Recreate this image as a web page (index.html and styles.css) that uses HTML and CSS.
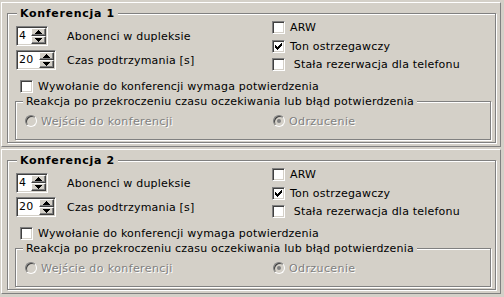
FILE: index.html
```html
<!DOCTYPE html>
<html lang="pl">
<head>
    <meta charset="UTF-8">
    <title>Konferencje</title>
    <link rel="stylesheet" href="styles.css">
</head>
<body>
    <div class="panel">
        <fieldset class="group">
            <legend class="title">Konferencja 1</legend>
            <div class="top">
                <div class="fields">
                    <div class="field">
                        <div class="spinwrap">
                            <div class="spin w32">
                                <span class="val">4</span>
                                <span class="btns">
                                    <span class="btn"><svg width="7" height="4" viewBox="0 0 7 4"><path d="M3 0h1v1h1v1h1v1h1v1H0V3h1V2h1V1h1z"/></svg></span>
                                    <span class="btn"><svg width="7" height="4" viewBox="0 0 7 4"><path d="M0 0h7v1H6v1H5v1H4v1H3V3H2V2H1V1H0z"/></svg></span>
                                </span>
                            </div>
                        </div>
                        <span>Abonenci w dupleksie</span>
                    </div>
                    <div class="field">
                        <div class="spinwrap">
                            <div class="spin w40">
                                <span class="val">20</span>
                                <span class="btns">
                                    <span class="btn"><svg width="7" height="4" viewBox="0 0 7 4"><path d="M3 0h1v1h1v1h1v1h1v1H0V3h1V2h1V1h1z"/></svg></span>
                                    <span class="btn"><svg width="7" height="4" viewBox="0 0 7 4"><path d="M0 0h7v1H6v1H5v1H4v1H3V3H2V2H1V1H0z"/></svg></span>
                                </span>
                            </div>
                        </div>
                        <span>Czas podtrzymania [s]</span>
                    </div>
                </div>
                <div class="opts">
                    <div class="check"><span class="box"></span>ARW</div>
                    <div class="check"><span class="box"><svg width="7" height="7" viewBox="0 0 7 7"><path d="M0 2h1v3H0zM1 3h1v3H1zM2 4h1v3H2zM3 3h1v3H3zM4 2h1v3H4zM5 1h1v3H5zM6 0h1v3H6z"/></svg></span>Ton ostrzegawczy</div>
                    <div class="check"><span class="box"></span>&nbsp;Stała rezerwacja dla telefonu</div>
                </div>
            </div>
            <div class="check confirm"><span class="box"></span>Wywołanie do konferencji wymaga potwierdzenia</div>
            <fieldset class="group inner">
                <legend>Reakcja po przekroczeniu czasu oczekiwania lub błąd potwierdzenia</legend>
                <div class="radios">
                    <div class="radio first"><span class="dot"></span>Wejście do konferencji</div>
                    <div class="radio"><span class="dot sel"></span>Odrzucenie</div>
                </div>
            </fieldset>
        </fieldset>
    </div>

    <div class="panel">
        <fieldset class="group">
            <legend class="title">Konferencja 2</legend>
            <div class="top">
                <div class="fields">
                    <div class="field">
                        <div class="spinwrap">
                            <div class="spin w32">
                                <span class="val">4</span>
                                <span class="btns">
                                    <span class="btn"><svg width="7" height="4" viewBox="0 0 7 4"><path d="M3 0h1v1h1v1h1v1h1v1H0V3h1V2h1V1h1z"/></svg></span>
                                    <span class="btn"><svg width="7" height="4" viewBox="0 0 7 4"><path d="M0 0h7v1H6v1H5v1H4v1H3V3H2V2H1V1H0z"/></svg></span>
                                </span>
                            </div>
                        </div>
                        <span>Abonenci w dupleksie</span>
                    </div>
                    <div class="field">
                        <div class="spinwrap">
                            <div class="spin w40">
                                <span class="val">20</span>
                                <span class="btns">
                                    <span class="btn"><svg width="7" height="4" viewBox="0 0 7 4"><path d="M3 0h1v1h1v1h1v1h1v1H0V3h1V2h1V1h1z"/></svg></span>
                                    <span class="btn"><svg width="7" height="4" viewBox="0 0 7 4"><path d="M0 0h7v1H6v1H5v1H4v1H3V3H2V2H1V1H0z"/></svg></span>
                                </span>
                            </div>
                        </div>
                        <span>Czas podtrzymania [s]</span>
                    </div>
                </div>
                <div class="opts">
                    <div class="check"><span class="box"></span>ARW</div>
                    <div class="check"><span class="box"><svg width="7" height="7" viewBox="0 0 7 7"><path d="M0 2h1v3H0zM1 3h1v3H1zM2 4h1v3H2zM3 3h1v3H3zM4 2h1v3H4zM5 1h1v3H5zM6 0h1v3H6z"/></svg></span>Ton ostrzegawczy</div>
                    <div class="check"><span class="box"></span>&nbsp;Stała rezerwacja dla telefonu</div>
                </div>
            </div>
            <div class="check confirm"><span class="box"></span>Wywołanie do konferencji wymaga potwierdzenia</div>
            <fieldset class="group inner">
                <legend>Reakcja po przekroczeniu czasu oczekiwania lub błąd potwierdzenia</legend>
                <div class="radios">
                    <div class="radio first"><span class="dot"></span>Wejście do konferencji</div>
                    <div class="radio"><span class="dot sel"></span>Odrzucenie</div>
                </div>
            </fieldset>
        </fieldset>
    </div>
</body>
</html>
```

FILE: styles.css
```css
*{
    box-sizing: border-box;
}
body{
    margin: 0;
    background: #d4d0c8;
    font: 11px/13px "DejaVu Sans", sans-serif;
    letter-spacing: 0.2px;
    color: #000;
}

/* raised panel around each conference */
.panel{
    width: 500px;
    height: 145px;
    margin: 2px 0 0 1px;
    padding: 4px 0 0 5px;
    border: 1px solid;
    border-color: #fff #808080 #808080 #fff;
}

/* etched group box */
.group{
    margin: 0;
    padding: 0 0 2px 0;
    min-width: 0;
    border: 1px solid #808080;
    box-shadow: inset 1px 1px 0 #fff, 1px 1px 0 #fff;
}
.panel > .group{
    width: 489px;
}
.group legend{
    margin-left: 9px;
    padding: 0 3px;
    background: #d4d0c8;
    line-height: 13px;
}
.title{
    font-weight: bold;
    letter-spacing: 0.7px;
}

.top{
    display: flex;
    padding-left: 8px;
}
.fields{
    width: 256px;
    padding-top: 6px;
    display: flex;
    flex-direction: column;
    gap: 4px;
}
.field{
    display: flex;
    align-items: center;
    height: 20px;
}
.spinwrap{
    width: 51px;
}

/* spin edit */
.spin{
    display: flex;
    height: 20px;
    padding: 1px;
    background: #fff;
    border: 1px solid;
    border-color: #808080 #fff #fff #808080;
    box-shadow: inset 1px 1px 0 #404040, inset -1px -1px 0 #d4d0c8;
}
.w32{ width: 32px; }
.w40{ width: 40px; }
.val{
    flex: 1;
    padding-left: 1px;
    line-height: 16px;
}
.btns{
    display: flex;
    flex-direction: column;
    width: 15px;
}
.btn{
    height: 8px;
    display: flex;
    align-items: center;
    justify-content: center;
    background: #d4d0c8;
    border: 1px solid;
    border-color: #fff #404040 #404040 #fff;
    box-shadow: inset -1px -1px 0 #808080;
}
.btn svg{
    display: block;
    shape-rendering: crispEdges;
}

/* check boxes */
.opts{
    padding-top: 1px;
    display: flex;
    flex-direction: column;
    gap: 5.5px;
}
.check{
    display: flex;
    align-items: center;
    height: 13px;
    white-space: nowrap;
}
.box{
    flex: none;
    width: 13px;
    height: 13px;
    margin-right: 5px;
    padding: 2px 0 0 2px;
    background: #fff;
    border: 1px solid;
    border-color: #808080 #fff #fff #808080;
    box-shadow: inset 1px 1px 0 #404040, inset -1px -1px 0 #d4d0c8;
}
.box svg{
    display: block;
    shape-rendering: crispEdges;
}
.confirm{
    margin: 9px 0 0 12px;
}

/* inner group with radios */
.inner{
    margin: 2px 4px 0 7px;
}
.inner legend{
    margin-left: 7px;
}
.radios{
    display: flex;
    padding: 7px 0 10px 9px;
}
.radio{
    display: flex;
    align-items: center;
    height: 12px;
    color: #808080;
    text-shadow: 1px 1px 0 #fff;
    letter-spacing: 0.4px;
    white-space: nowrap;
}
.radio.first{
    width: 248px;
}
.dot{
    flex: none;
    width: 12px;
    height: 12px;
    margin-right: 4px;
    display: flex;
    align-items: center;
    justify-content: center;
    border-radius: 50%;
    background: #d4d0c8;
    border: 1px solid;
    border-color: #808080 #fff #fff #808080;
    box-shadow: inset 1px 1px 0 #404040, inset -1px -1px 0 #d4d0c8;
}
.dot.sel::after{
    content: "";
    width: 4px;
    height: 4px;
    border-radius: 50%;
    background: #808080;
}
```
